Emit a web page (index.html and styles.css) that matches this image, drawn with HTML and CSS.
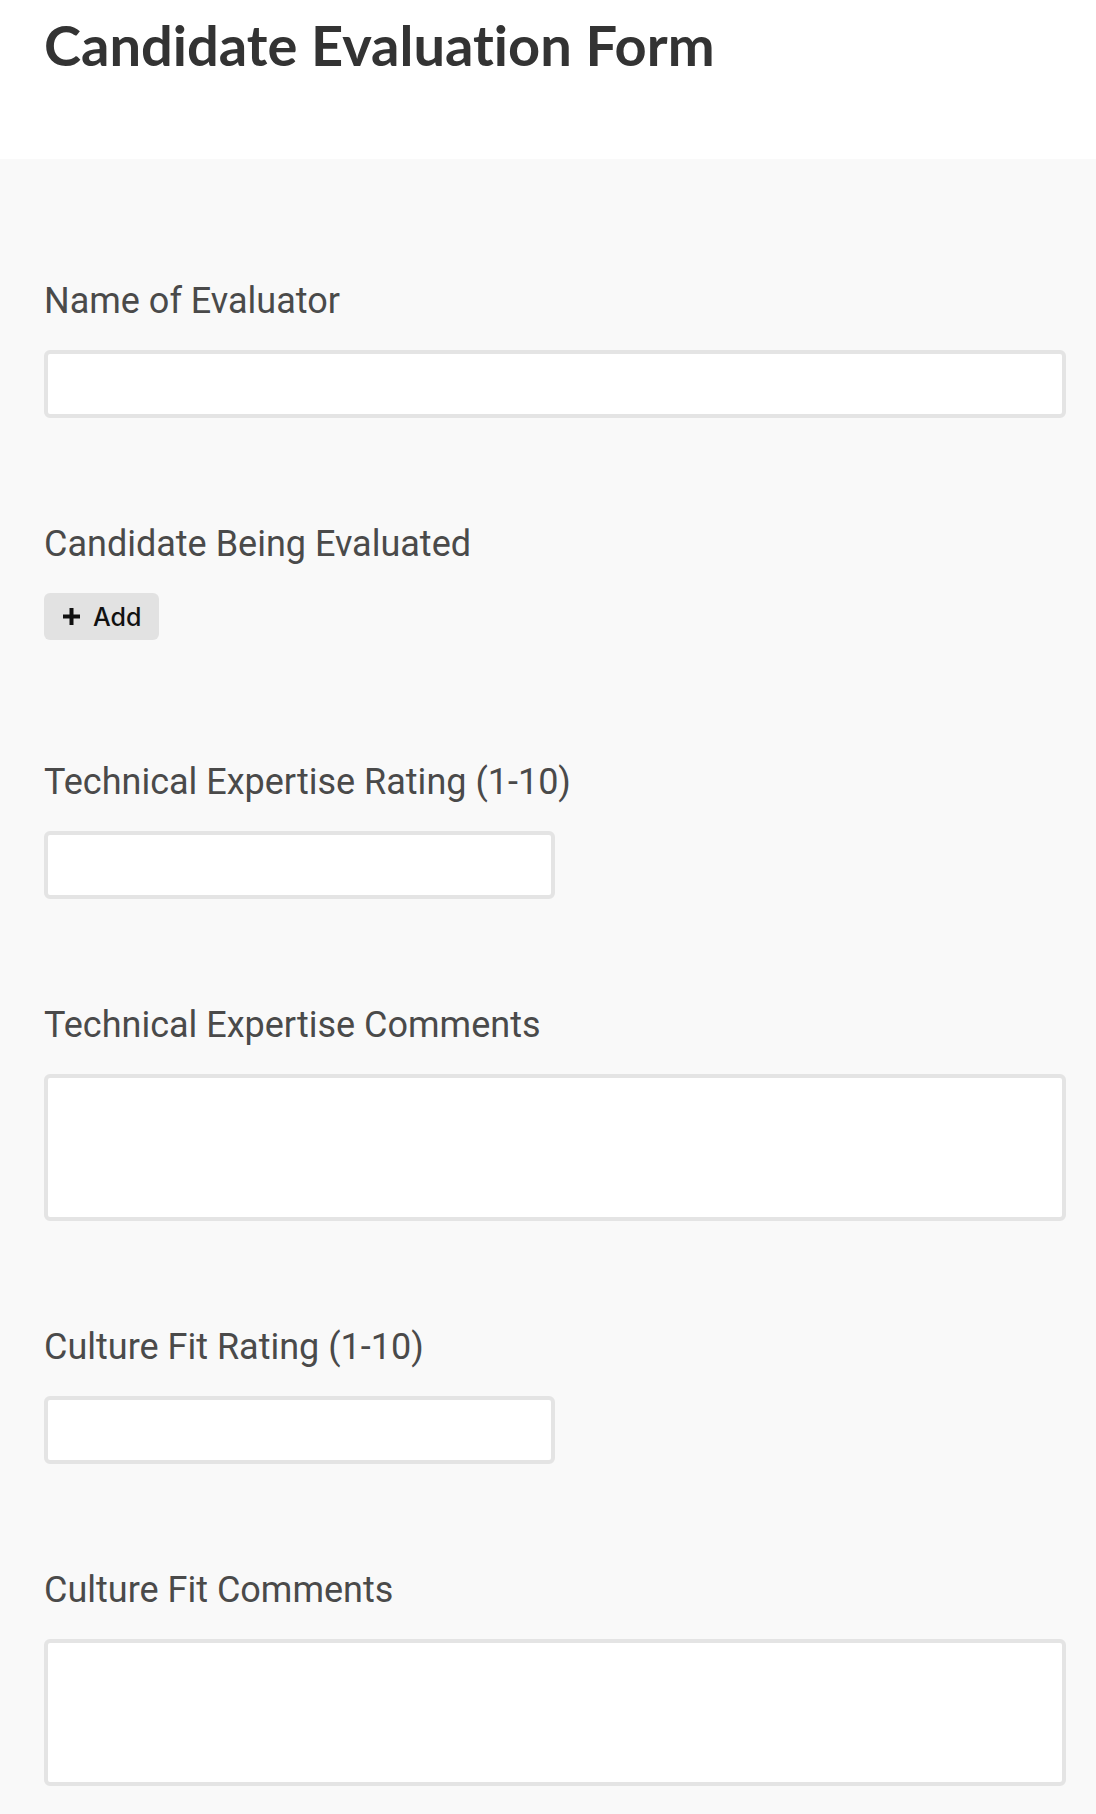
FILE: index.html
```html
<!DOCTYPE html>
<html lang="en">
<head>
<meta charset="utf-8">
<title>Candidate Evaluation Form</title>
<link rel="stylesheet" href="styles.css">
</head>
<body>
<header class="page-header">
  <h1 class="page-title">Candidate Evaluation Form</h1>
</header>
<main class="form-body">
  <div class="field">
    <label class="field-label">Name of Evaluator</label>
    <div class="input input-full"></div>
  </div>
  <div class="field field-link">
    <label class="field-label">Candidate Being Evaluated</label>
    <button class="add-btn" type="button">
      <svg class="add-icon" width="17" height="17" viewBox="0 0 17 17" aria-hidden="true">
        <rect x="6.5" y="0" width="4" height="17" fill="#111"/>
        <rect x="0" y="6.5" width="17" height="4" fill="#111"/>
      </svg>
      <span>Add</span>
    </button>
  </div>
  <div class="field">
    <label class="field-label">Technical Expertise Rating (1-10)</label>
    <div class="input input-half"></div>
  </div>
  <div class="field">
    <label class="field-label">Technical Expertise Comments</label>
    <div class="input input-full textarea"></div>
  </div>
  <div class="field">
    <label class="field-label">Culture Fit Rating (1-10)</label>
    <div class="input input-half"></div>
  </div>
  <div class="field">
    <label class="field-label">Culture Fit Comments</label>
    <div class="input input-full textarea"></div>
  </div>
</main>
</body>
</html>
```

FILE: styles.css
```css
* { box-sizing: border-box; }

html, body {
  margin: 0;
  padding: 0;
  background: #f9f9f9;
}

.page-header {
  background: #ffffff;
  height: 159px;
  padding: 11px 30px 0 44px;
}

.page-title {
  margin: 0;
  font-family: Lato, "Liberation Sans", sans-serif;
  font-weight: 700;
  font-size: 56px;
  line-height: 1.2;
  color: #333333;
  font-variant-ligatures: none;
}

.form-body {
  background: #f9f9f9;
  padding: 122px 30px 26px 44px;
}

.field {
  display: flex;
  flex-direction: column;
  align-items: flex-start;
  margin-bottom: 106px;
}

.field:last-child {
  margin-bottom: 0;
}

.field-link {
  margin-bottom: 122px;
}

.field-label {
  font-family: Roboto, "Liberation Sans", sans-serif;
  font-size: 36px;
  line-height: 40px;
  color: #4a4a4a;
  margin-bottom: 29px;
}

.input {
  background: #ffffff;
  border: 4px solid #e4e4e4;
  border-radius: 6px;
  height: 68px;
}

.input-full { width: 100%; }
.input-half { width: 50%; }

.textarea { height: 147px; }

.add-btn {
  display: flex;
  align-items: center;
  gap: 13px;
  height: 47px;
  padding: 0 18px 0 19px;
  border: none;
  border-radius: 6px;
  background: #e2e2e2;
  font-family: Inter, "Liberation Sans", sans-serif;
  font-weight: 500;
  font-size: 25px;
  color: #111111;
  cursor: pointer;
}

.add-icon { display: block; flex: none; }
```
